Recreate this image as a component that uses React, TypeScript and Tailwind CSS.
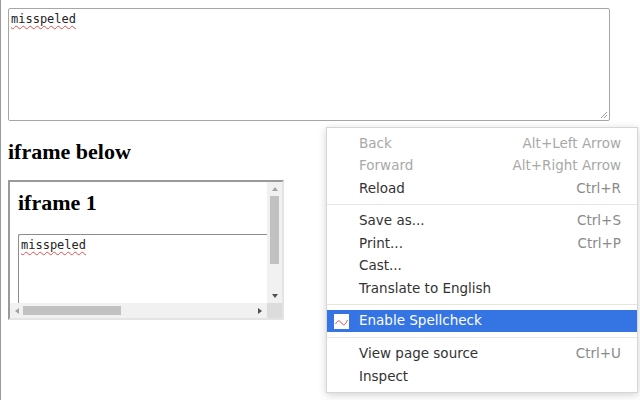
import { ReactNode } from "react";

type MenuItem =
    | { kind: "item"; label: string; shortcut?: string; disabled?: boolean; active?: boolean }
    | { kind: "sep" };

const menu: MenuItem[] = [
    { kind: "item", label: "Back", shortcut: "Alt+Left Arrow", disabled: true },
    { kind: "item", label: "Forward", shortcut: "Alt+Right Arrow", disabled: true },
    { kind: "item", label: "Reload", shortcut: "Ctrl+R" },
    { kind: "sep" },
    { kind: "item", label: "Save as...", shortcut: "Ctrl+S" },
    { kind: "item", label: "Print...", shortcut: "Ctrl+P" },
    { kind: "item", label: "Cast..." },
    { kind: "item", label: "Translate to English" },
    { kind: "sep" },
    { kind: "item", label: "Enable Spellcheck", active: true },
    { kind: "sep" },
    { kind: "item", label: "View page source", shortcut: "Ctrl+U" },
    { kind: "item", label: "Inspect" },
];

function Misspelled({ children }: { children: ReactNode }) {
    return (
        <span className="underline decoration-wavy decoration-[#e05050] decoration-1 underline-offset-[2px]">
            {children}
        </span>
    );
}

function SpellIcon() {
    return (
        <svg width="15" height="15" viewBox="0 0 15 15" className="shrink-0">
            <rect x="0" y="0" width="15" height="15" fill="#fff" />
            <path
                d="M1.5 10 C4 6, 5.5 6, 7.5 9 S11 11.5, 13.5 6"
                fill="none"
                stroke="#d9534f"
                strokeWidth="1"
            />
        </svg>
    );
}

function ContextMenu() {
    return (
        <div
            className="absolute left-[325px] top-[127px] w-[312px] bg-white border border-[#d6d6d6] shadow-[0_2px_8px_rgba(0,0,0,0.18)] py-[4px] text-[13.5px] leading-none"
            style={{ fontFamily: '"DejaVu Sans", sans-serif' }}
        >
            {menu.map((m, i) =>
                m.kind === "sep" ? (
                    <div key={i} className="my-[4.6px] h-px bg-[#e6e6e6]" />
                ) : (
                    <div
                        key={i}
                        className={`h-[22.5px] flex items-center pr-[16px] ${
                            m.active ? "bg-[#3574e3] text-white" : ""
                        }`}
                    >
                        <div className="w-[32px] pl-[7px] flex items-center">
                            {m.active && <SpellIcon />}
                        </div>
                        <span
                            className={`flex-1 ${
                                m.active ? "text-white" : m.disabled ? "text-[#a8a8a8]" : "text-[#333]"
                            }`}
                        >
                            {m.label}
                        </span>
                        {m.shortcut && (
                            <span className={m.disabled ? "text-[#a8a8a8]" : "text-[#8a8a8a]"}>
                                {m.shortcut}
                            </span>
                        )}
                    </div>
                )
            )}
        </div>
    );
}

function Arrow({ dir }: { dir: "up" | "down" | "left" | "right" }) {
    const pts = {
        up: "1,6 4,2 7,6",
        down: "1,2 4,6 7,2",
        left: "6,1 2,4 6,7",
        right: "2,1 6,4 2,7",
    }[dir];
    const fill = dir === "up" || dir === "left" ? "#a3a3a3" : "#505050";
    return (
        <svg width="8" height="8" viewBox="0 0 8 8">
            <polygon points={pts} fill={fill} />
        </svg>
    );
}

function FakeIframe() {
    return (
        <div className="w-[276px] h-[140px] border-2 border-t-[#9a9a9a] border-l-[#9a9a9a] border-b-[#e4e4e4] border-r-[#e4e4e4] bg-white flex flex-col">
            <div className="flex flex-1 min-h-0">
                <div className="flex-1 overflow-hidden pl-[8px] pt-[8px]">
                    <h1
                        className="text-[22px] font-bold text-black leading-none mt-[2px] mb-[20px]"
                        style={{ fontFamily: '"Liberation Serif", serif' }}
                    >
                        iframe 1
                    </h1>
                    <div
                        className="w-[300px] h-[80px] border border-[#8c8c8c] border-r-0 rounded-[2px] pl-[2px] pt-[1px] text-[12px] text-[#222]"
                        style={{ fontFamily: '"DejaVu Sans Mono", monospace' }}
                    >
                        <Misspelled>misspeled</Misspelled>
                    </div>
                </div>
                <div className="w-[15px] bg-[#f1f1f1] flex flex-col items-center">
                    <div className="h-[14px] flex items-center justify-center">
                        <Arrow dir="up" />
                    </div>
                    <div className="w-[9px] h-[68px] bg-[#c1c1c1]" />
                    <div className="flex-1" />
                    <div className="h-[14px] flex items-center justify-center">
                        <Arrow dir="down" />
                    </div>
                </div>
            </div>
            <div className="h-[15px] flex bg-[#f1f1f1]">
                <div className="flex-1 flex items-center">
                    <div className="w-[13px] flex justify-center">
                        <Arrow dir="left" />
                    </div>
                    <div className="w-[98px] h-[9px] bg-[#c1c1c1]" />
                    <div className="flex-1" />
                    <div className="w-[14px] flex justify-center">
                        <Arrow dir="right" />
                    </div>
                </div>
                <div className="w-[15px] bg-[#dcdcdc]" />
            </div>
        </div>
    );
}

export default function App() {
    return (
        <div className="relative w-[640px] h-[400px] bg-white border-l border-[#9a9a9a] overflow-hidden">
            <div className="pl-[7px] pt-[8px]">
                <div
                    className="relative w-[602px] h-[113px] border border-[#a6a6a6] rounded-[2px] pl-[2px] pt-[1px] text-[12px] text-[#222]"
                    style={{ fontFamily: '"DejaVu Sans Mono", monospace' }}
                >
                    <Misspelled>misspeled</Misspelled>
                    <svg
                        className="absolute right-[1px] bottom-[1px]"
                        width="8"
                        height="8"
                        viewBox="0 0 8 8"
                    >
                        <path d="M7 1 L1 7 M7 4 L4 7" stroke="#9a9a9a" strokeWidth="1" />
                    </svg>
                </div>
                <h2
                    className="text-[22px] font-bold text-black leading-none mt-[20px] mb-[17px]"
                    style={{ fontFamily: '"Liberation Serif", serif' }}
                >
                    iframe below
                </h2>
                <FakeIframe />
            </div>
            <ContextMenu />
        </div>
    );
}
